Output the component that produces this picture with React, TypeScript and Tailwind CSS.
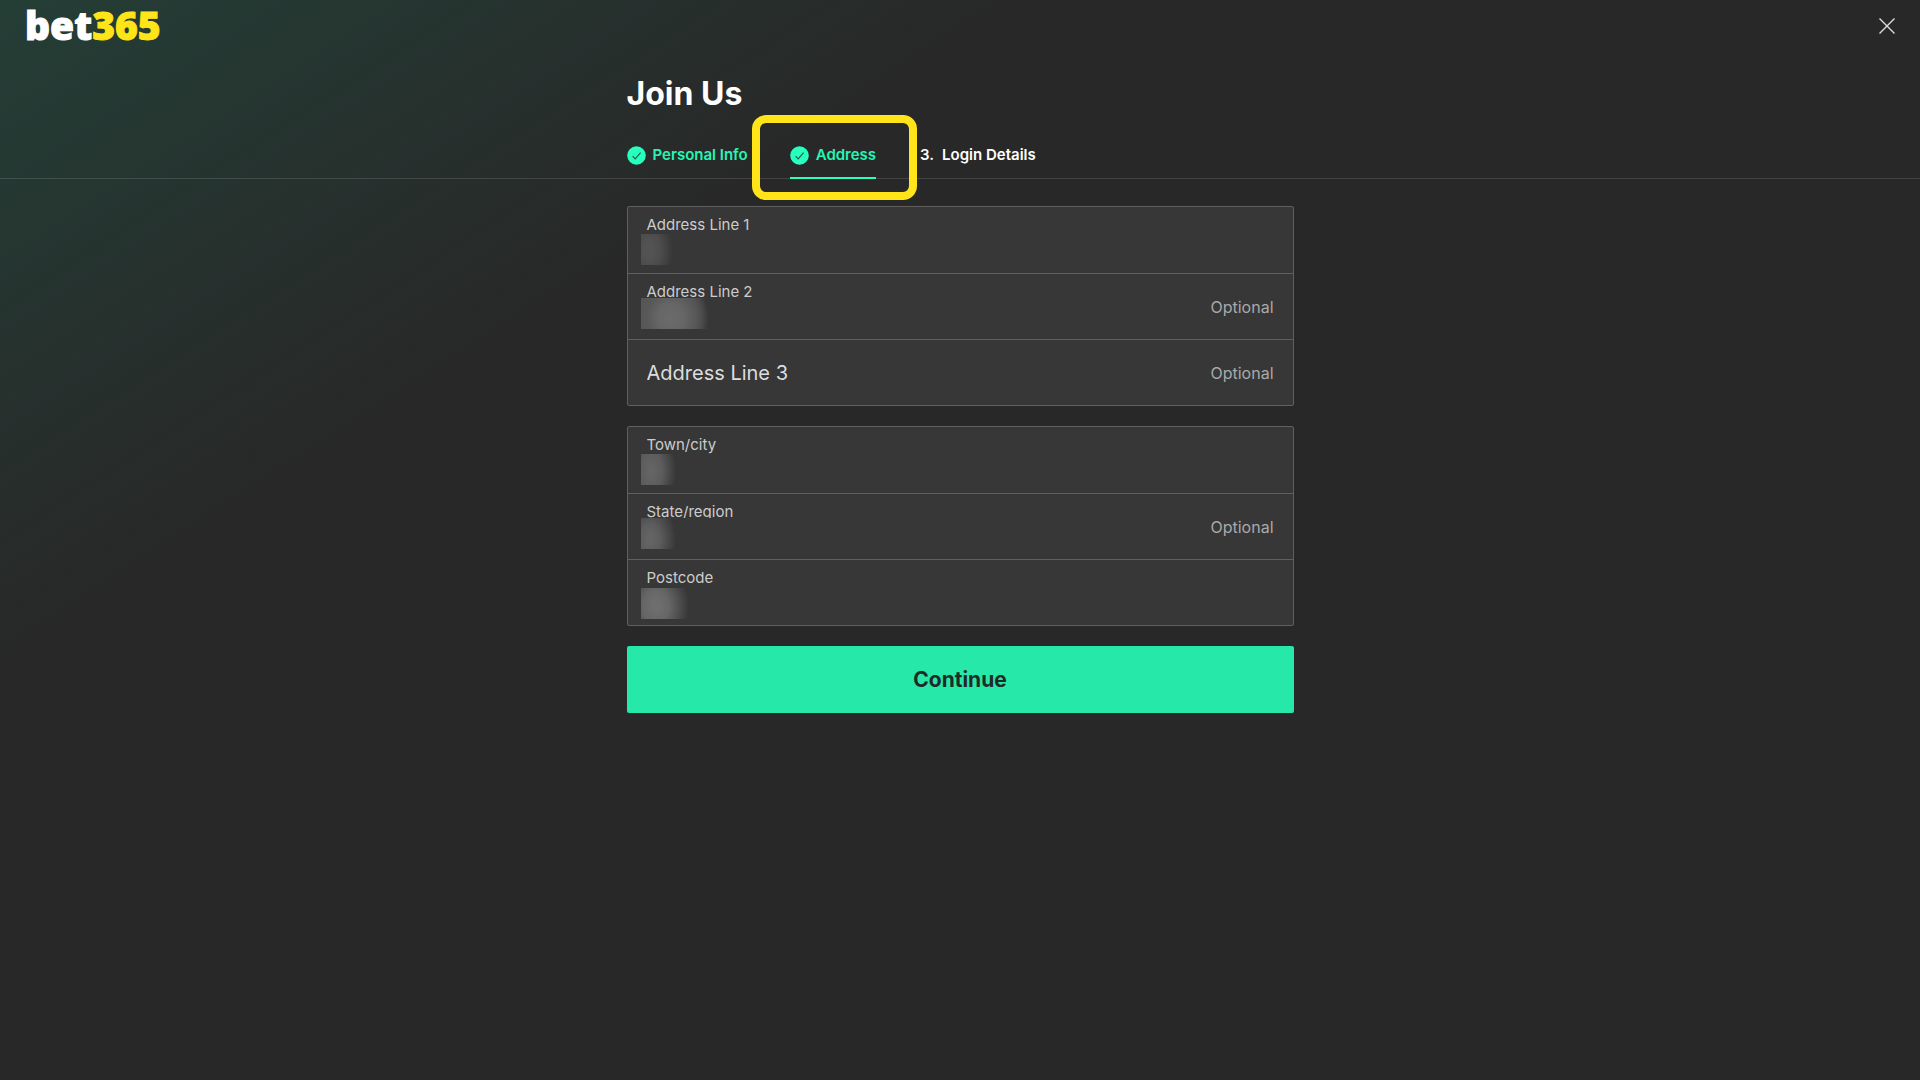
type Field = {
  id: string;
  label: string;
  optional?: boolean;
  mask?: string;
};

const streetFields: Field[] = [
  {
    id: "address-1",
    label: "Address Line 1",
    mask: "top-[27px] bg-[radial-gradient(ellipse_24px_36px_at_8px_16px,#535353_20%,#4c4c4c_50%,#373737_100%)]",
  },
  {
    id: "address-2",
    label: "Address Line 2",
    optional: true,
    mask: "top-6 bg-[radial-gradient(ellipse_38px_40px_at_30px_20px,#6b6b6b_0%,#666666_35%,#585858_65%,transparent_100%),linear-gradient(90deg,#555555_0px,#555555_42px,#373737_66px)]",
  },
  { id: "address-3", label: "Address Line 3", optional: true },
];

const regionFields: Field[] = [
  {
    id: "town",
    label: "Town/city",
    mask: "top-[27px] bg-[radial-gradient(ellipse_25px_42px_at_10px_17px,#646464_10%,#5c5c5c_45%,#373737_100%)]",
  },
  {
    id: "state",
    label: "State/region",
    optional: true,
    mask: "top-6 bg-[radial-gradient(ellipse_26px_38px_at_9px_21px,#646464_10%,#5c5c5c_40%,#373737_100%)]",
  },
  {
    id: "postcode",
    label: "Postcode",
    mask: "top-7 bg-[radial-gradient(ellipse_33px_42px_at_15px_18px,#6e6e6e_10%,#666666_40%,#373737_100%)]",
  },
];

function CheckCircle() {
  return (
    <svg viewBox="0 0 19 19" className="size-[19px] shrink-0" aria-hidden="true">
      <circle cx="9.5" cy="9.5" r="9.3" fill="#26ffbe" />
      <path d="M5.6 10.2 L8.2 12.8 L13.6 6.6" fill="none" stroke="#2b5a4b" strokeWidth="1.2" />
    </svg>
  );
}

function FieldRow({ field }: { field: Field }) {
  return (
    <div className="relative flex h-[66px] items-center border-[#5f5f5f] pr-[19px] pl-[19px] not-first:border-t">
      {field.mask ? (
        <div className="flex h-full min-w-0 flex-1 flex-col pt-[7px]">
          <label htmlFor={field.id} className="text-[15px] leading-[21px] text-[#cccccc]">
            {field.label}
          </label>
          <input
            id={field.id}
            type="text"
            className="w-full min-w-0 flex-1 bg-transparent text-xl text-white outline-none"
          />
        </div>
      ) : (
        <input
          id={field.id}
          type="text"
          aria-label={field.label}
          placeholder={field.label}
          className="h-full min-w-0 flex-1 bg-transparent text-xl text-white outline-none placeholder:text-[#dddddd]"
        />
      )}
      {field.optional && <span className="text-base text-[#a9a9a9]">Optional</span>}
      {field.mask && (
        <span aria-hidden="true" className={`pointer-events-none absolute left-[13px] h-[31px] w-32 ${field.mask}`} />
      )}
    </div>
  );
}

function FieldGroup({ fields }: { fields: Field[] }) {
  return (
    <div className="rounded-xs border border-[#5f5f5f] bg-[#373737]">
      {fields.map((field) => (
        <FieldRow key={field.id} field={field} />
      ))}
    </div>
  );
}

export default function App() {
  return (
    <div className="min-h-screen bg-[#282828] bg-[linear-gradient(147deg,#243e36_0px,#26312e_320px,#282828_560px)] font-['Inter',sans-serif] text-white">
      <header className="flex h-[51px] items-center justify-between pr-[25px] pl-[25px]">
        <a href="#home" className="pb-0.5 font-['Noto_Sans',sans-serif] text-[39px] leading-none font-black [-webkit-text-stroke:1px_currentColor]">
          bet<span className="text-[#ffe418]">365</span>
        </a>
        <button type="button" aria-label="Close" className="cursor-pointer">
          <svg viewBox="0 0 16 16" className="size-4" aria-hidden="true">
            <path d="M0.5 0.5 L15.5 15.5 M15.5 0.5 L0.5 15.5" stroke="#dedede" strokeWidth="1.4" />
          </svg>
        </button>
      </header>

      <div className="border-b border-[#ffffff20] pt-[23px]">
        <div className="mx-auto w-full max-w-[667px]">
          <h1 className="text-[32px] leading-10 font-bold">Join Us</h1>
          <nav aria-label="Sign-up steps" className="mt-5">
            <ol className="flex gap-[42px] text-[15px] leading-5 font-semibold">
              <li className="flex h-11 items-center gap-[7px] pb-0.5 text-[#26f5b5]">
                <CheckCircle />
                <a href="#personal">Personal Info</a>
              </li>
              <li className="relative -mb-px flex h-[45px] items-center gap-[7px] border-b-2 border-[#26ffbe] pb-px text-[#26f5b5]">
                <CheckCircle />
                <a href="#address" aria-current="step">Address</a>
                <span
                  aria-hidden="true"
                  className="pointer-events-none absolute -top-[19px] -right-[41px] -left-[38px] h-[85px] rounded-[14px] border-8 border-[#ffe419]"
                />
              </li>
              <li className="flex h-11 items-center gap-2 pb-0.5 pl-0.5">
                <span>3.</span>
                <a href="#login">Login Details</a>
              </li>
            </ol>
          </nav>
        </div>
      </div>

      <form className="mx-auto mt-[27px] flex w-full max-w-[667px] flex-col gap-5 pb-10">
        <FieldGroup fields={streetFields} />
        <FieldGroup fields={regionFields} />
        <button
          type="button"
          className="h-[67px] cursor-pointer rounded-xs bg-[#26e8a9] text-[21px] font-bold text-[#202a27]"
        >
          Continue
        </button>
      </form>
    </div>
  );
}
